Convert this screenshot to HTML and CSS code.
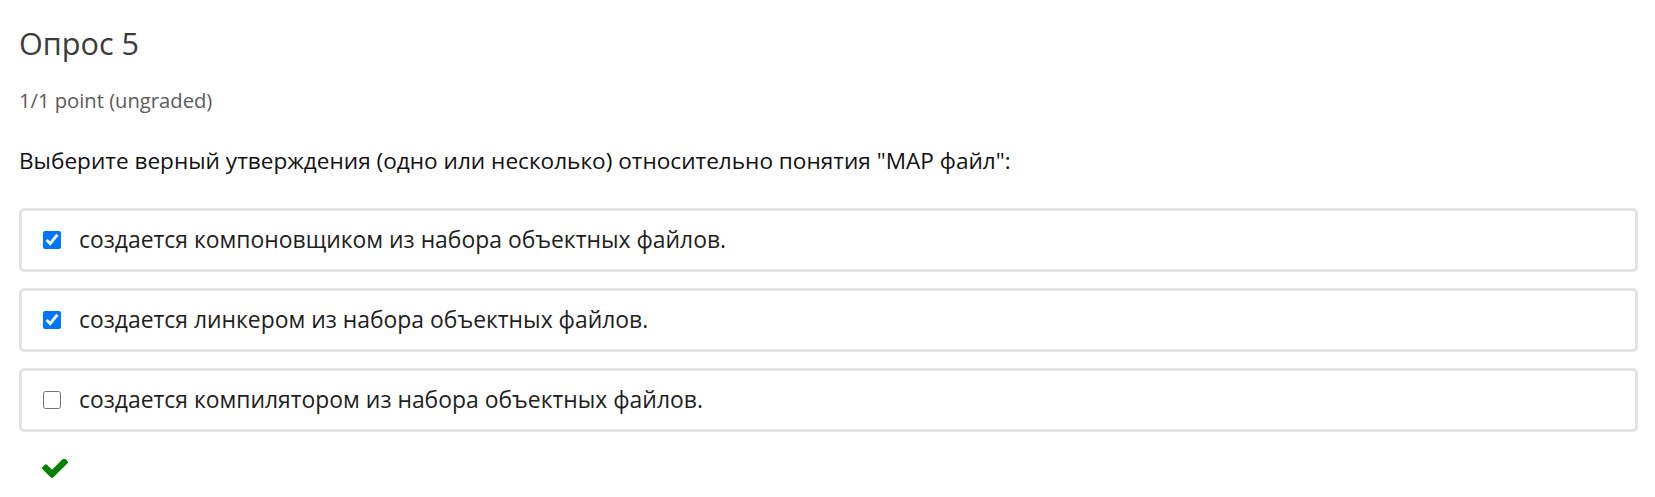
FILE: index.html
```html
<!DOCTYPE html>
<html lang="ru">
<head>
<meta charset="utf-8">
<title>Опрос 5</title>
<link rel="stylesheet" href="styles.css">
</head>
<body>
<main class="problem">
  <h2 class="problem-title">Опрос 5</h2>
  <div class="problem-progress">1/1 point (ungraded)</div>
  <p class="question">Выберите верный утверждения (одно или несколько) относительно понятия "MAP файл":</p>
  <div class="choices">
    <label class="choice">
      <input type="checkbox" class="choice-input" checked>
      <span class="choice-text">создается компоновщиком из набора объектных файлов.</span>
    </label>
    <label class="choice">
      <input type="checkbox" class="choice-input" checked>
      <span class="choice-text">создается линкером из набора объектных файлов.</span>
    </label>
    <label class="choice">
      <input type="checkbox" class="choice-input">
      <span class="choice-text">создается компилятором из набора объектных файлов.</span>
    </label>
  </div>
  <div class="status">
    <svg class="status-icon" viewBox="115 370 1556 1160" preserveAspectRatio="none" aria-label="correct"><path d="M1671 566q0 40-28 68l-724 724-136 136q-28 28-68 28t-68-28l-136-136-362-362q-28-28-28-68t28-68l136-136q28-28 68-28t68 28l294 295 656-657q28-28 68-28t68 28l136 136q28 28 28 68z"/></svg>
  </div>
</main>
</body>
</html>
```
FILE: styles.css
```css
html, body {
  margin: 0;
  padding: 0;
  background: #ffffff;
}

.problem {
  font-family: "Open Sans", "Noto Sans", sans-serif;
  padding: 23px 17px 0 19px;
}

.problem-title {
  margin: 0;
  font-size: 30.6px;
  line-height: 40px;
  font-weight: 400;
  color: #3c3c3c;
}

.problem-progress {
  margin-top: 23px;
  font-size: 20.2px;
  line-height: 28px;
  color: #5b5b5b;
}

.question {
  margin: 31px 0 0 0;
  font-size: 22.6px;
  line-height: 32px;
  color: #111111;
}

.choices {
  margin-top: 31px;
  display: flex;
  flex-direction: column;
  gap: 16px;
}

.choice {
  display: flex;
  align-items: center;
  height: 64px;
  box-sizing: border-box;
  padding: 0 21px;
  border: 3px solid #e3e3e3;
  border-radius: 5px;
}

.choice-input {
  width: 18px;
  height: 18px;
  margin: 0;
  accent-color: #0075ff;
  flex: none;
}

.choice-text {
  margin-left: 18px;
  font-size: 22.9px;
  line-height: 32px;
  color: #1e1e1e;
}

.status {
  padding: 27px 0 0 23px;
  display: flex;
}

.status-icon {
  width: 26px;
  height: 19px;
  fill: #008100;
}
```
